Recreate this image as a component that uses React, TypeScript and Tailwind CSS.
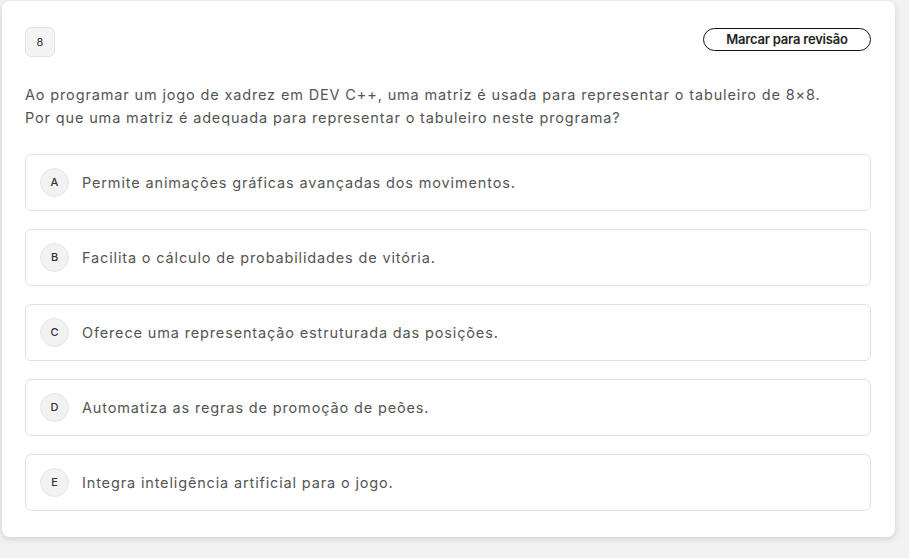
import React from "react";

const options = [
  { l: "A", t: "Permite animações gráficas avançadas dos movimentos." },
  { l: "B", t: "Facilita o cálculo de probabilidades de vitória." },
  { l: "C", t: "Oferece uma representação estruturada das posições." },
  { l: "D", t: "Automatiza as regras de promoção de peões." },
  { l: "E", t: "Integra inteligência artificial para o jogo." },
];

export default function App() {
  return (
    <div
      className="w-[909px] h-[558px] bg-[#f2f2f2] pl-[2px] pt-[1px]"
      style={{ fontFamily: "Inter, 'Noto Sans', sans-serif" }}
    >
      <div className="w-[893px] h-[536px] bg-white rounded-[8px] shadow-[0_2px_6px_rgba(0,0,0,0.15)] px-[23px] pt-[26px]">
        <div className="flex items-start justify-between">
          <div className="w-[30px] h-[30px] rounded-[6px] bg-[#f4f4f4] border border-[#e3e3e3] flex items-center justify-center text-[11px] text-[#333]">
            8
          </div>
          <button className="mr-[1px] mt-[1px] w-[168px] h-[23px] rounded-full border-[1.5px] border-[#111] text-[13px] font-semibold tracking-[-0.2px] text-[#222] flex items-center justify-center">
            Marcar para revisão
          </button>
        </div>
        <div className="mt-[26px] text-[14.5px] tracking-[0.85px] leading-[23px] text-[#555]">
          <p>Ao programar um jogo de xadrez em DEV C++, uma matriz é usada para representar o tabuleiro de 8×8.</p>
          <p>Por que uma matriz é adequada para representar o tabuleiro neste programa?</p>
        </div>
        <div className="mt-[25px] flex flex-col gap-[18px] w-[846px]">
          {options.map((o) => (
            <div
              key={o.l}
              className="h-[57px] rounded-[6px] border border-[#e2e2e2] flex items-center pl-[14px]"
            >
              <div className="w-[29px] h-[29px] rounded-full bg-[#f2f2f2] border border-[#e6e6e6] flex items-center justify-center text-[11px] font-medium text-[#333]">
                {o.l}
              </div>
              <span className="ml-[13px] text-[14.5px] tracking-[0.85px] text-[#555]">{o.t}</span>
            </div>
          ))}
        </div>
      </div>
    </div>
  );
}
